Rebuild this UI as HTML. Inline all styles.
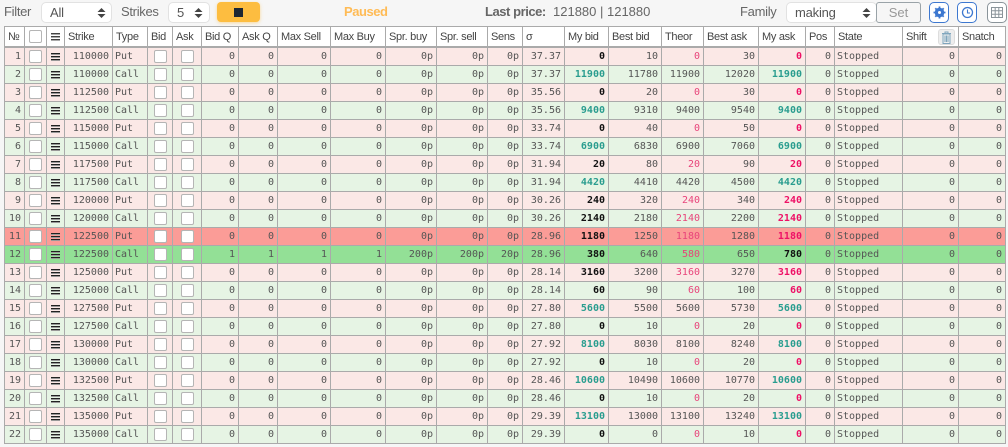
<!DOCTYPE html>
<html><head><meta charset="utf-8"><style>
html,body{margin:0;padding:0;width:1008px;height:447px;overflow:hidden;background:#f6f6f6;font-family:"Liberation Sans",sans-serif;color:#666}
.a{position:absolute}
.t{font-size:13px;line-height:20px;top:2px;white-space:nowrap;letter-spacing:-.3px}
.s{top:2px;height:19px;border:1px solid #e2e2e2;border-radius:5px;background:#fff;box-sizing:content-box;font-size:13px;line-height:19px;color:#555;letter-spacing:-.2px}
.s span{position:absolute;left:8px}
.s svg{position:absolute;top:4px}
.ib{top:2px;width:18px;height:19px;border:1px solid #3d78d0;border-radius:5px;background:#fff}
table{position:absolute;left:4px;top:26px;border-collapse:separate;border-spacing:0;table-layout:fixed;width:1002px;border-top:1px solid #aaa;border-left:1px solid #aaa}
td,th{border-right:1px solid #aaa;border-bottom:1px solid #aaa;padding:0 3px;overflow:hidden;white-space:nowrap;box-sizing:border-box}
th{height:21px;background:#fff;border-bottom:2px solid #aaa;font:normal 11px/18px "Liberation Sans",sans-serif;letter-spacing:-.3px;color:#444;text-align:left;position:relative;padding:0 3px}
td{height:18px;font:10px/17px "DejaVu Sans Mono",monospace;color:#555;text-align:right}
tr.p td{background:#fbe8e6}
tr.g td{background:#e6f4e4}
tr.P td{background:#fb9c97}
tr.G td{background:#93e096}
td:nth-child(2),td:nth-child(3),td:nth-child(6),td:nth-child(7){text-align:center;padding:0}
td:nth-child(5),td:nth-child(22){text-align:left;padding-left:2px}
td.b{font-weight:bold;color:#111}
td.c{color:#2a9d8f;font-weight:bold}
td.r{color:#e8447a}
td.m{color:#ee1166;font-weight:bold}
i{display:inline-block;width:11px;height:11px;border:1px solid #b5b5b5;border-radius:2px;background:#fff;vertical-align:middle;margin-top:1px}
u{display:block;width:9px;height:8px;margin:1px auto 0;background:repeating-linear-gradient(#222 0 1px,#999 1px 2px,transparent 2px 3px)}
th u{margin-top:0;background:repeating-linear-gradient(#444 0 1px,#aaa 1px 2px,transparent 2px 3px)}
</style></head><body>
<div class="a t" style="left:4px">Filter</div>
<div class="a s" style="left:41px;width:69px"><span>All</span><svg class="a" style="left:55px" width="9" height="12" viewBox="0 0 9 12"><path d="M4.500 1L8.500 5H.5zM4.500 11L.5 7H8.500z" fill="#444"/></svg></div>
<div class="a t" style="left:121px">Strikes</div>
<div class="a s" style="left:168px;width:40px"><span>5</span><svg class="a" style="left:25px" width="9" height="12" viewBox="0 0 9 12"><path d="M4.500 1L8.500 5H.5zM4.500 11L.5 7H8.500z" fill="#444"/></svg></div>
<div class="a" style="left:217px;top:2px;width:43px;height:20px;background:#fdbd40;border-radius:4px;box-shadow:0 1px 3px rgba(253,189,64,.5)"></div>
<div class="a" style="left:234px;top:8px;width:9px;height:9px;background:#1d2733"></div>
<div class="a t" style="left:344px;font-weight:bold;color:#ffbb55;letter-spacing:-.45px">Paused</div>
<div class="a t" style="left:485px;font-weight:bold;color:#666;letter-spacing:-.45px">Last price:</div>
<div class="a t" style="left:553px;letter-spacing:0">121880 | 121880</div>
<div class="a t" style="left:740px">Family</div>
<div class="a s" style="left:786px;width:89px"><span>making</span><svg class="a" style="left:75px" width="9" height="12" viewBox="0 0 9 12"><path d="M4.500 1L8.500 5H.5zM4.500 11L.5 7H8.500z" fill="#444"/></svg></div>
<div class="a" style="left:876px;top:2px;width:43px;height:19px;border:1px solid #9aa3a8;border-radius:3px;background:#f6f6f6;font-size:13px;line-height:19px;text-align:center;color:#999">Set</div>
<div class="a ib" style="left:929px"><svg class="a" style="left:3px;top:3px" width="13" height="13" viewBox="0 0 13 13"><circle cx="6.500" cy="6.500" r="3.500" fill="none" stroke="#3d78d0" stroke-width="2.600"/><path d="M6.500 .5V12.500M.5 6.500H12.500M2.300 2.300L10.700 10.700M10.700 2.300L2.300 10.700" stroke="#3d78d0" stroke-width="1.800"/><circle cx="6.500" cy="6.500" r="1.500" fill="#fff"/></svg></div>
<div class="a ib" style="left:957px"><svg class="a" style="left:3px;top:3px" width="13" height="13" viewBox="0 0 13 13"><circle cx="6.500" cy="6.500" r="5" fill="none" stroke="#3d78d0" stroke-width="1.300"/><path d="M6.500 3.500V7H9" fill="none" stroke="#3d78d0" stroke-width="1.100"/></svg></div>
<div class="a ib" style="left:987px;border-color:#8a949a"><svg class="a" style="left:2px;top:3px" width="14" height="13" viewBox="0 0 14 13"><path d="M1.500 1.500H12.500V11.500H1.500ZM1.500 4.800H12.500M1.500 8.200H12.500M5.200 1.500V11.500M8.800 1.500V11.500" fill="none" stroke="#8a949a" stroke-width="1"/></svg></div>
<table><colgroup><col style="width:20px"><col style="width:22px"><col style="width:18px"><col style="width:48px"><col style="width:35px"><col style="width:25px"><col style="width:29px"><col style="width:37px"><col style="width:39px"><col style="width:53px"><col style="width:55px"><col style="width:51px"><col style="width:51px"><col style="width:35px"><col style="width:42px"><col style="width:44px"><col style="width:53px"><col style="width:42px"><col style="width:55px"><col style="width:47px"><col style="width:29px"><col style="width:68px"><col style="width:56px"><col style="width:47px"></colgroup>
<thead><tr><th>№</th><th style="padding:0;text-align:center"><i style="margin-top:-1px"></i></th><th style="padding:0;text-align:center"><u></u></th><th>Strike</th><th>Type</th><th>Bid</th><th>Ask</th><th>Bid Q</th><th>Ask Q</th><th>Max Sell</th><th>Max Buy</th><th>Spr. buy</th><th>Spr. sell</th><th>Sens</th><th>σ</th><th>My bid</th><th>Best bid</th><th>Theor</th><th>Best ask</th><th>My ask</th><th>Pos</th><th>State</th><th>Shift<span class="a" style="left:35px;top:2px;width:17px;height:16px;background:#eee;border:1px solid #ddd;border-radius:3px;box-sizing:border-box"><svg class="a" style="left:2px;top:1px" width="11" height="13" viewBox="0 0 11 13"><path d="M2 3V12.500H9V3ZM1 2.500H10M4 2V1H7V2M4 4.500V11M5.500 4.500V11M7 4.500V11" fill="none" stroke="#7fa5bd" stroke-width="1"/></svg></span></th><th>Snatch</th></tr></thead>
<tbody>
<tr class="p"><td>1</td><td><i></i></td><td><u></u></td><td>110000</td><td>Put</td><td><i></i></td><td><i></i></td><td>0</td><td>0</td><td>0</td><td>0</td><td>0p</td><td>0p</td><td>0p</td><td>37.37</td><td class="b">0</td><td>10</td><td class="r">0</td><td>30</td><td class="m">0</td><td>0</td><td>Stopped</td><td>0</td><td>0</td></tr>
<tr class="g"><td>2</td><td><i></i></td><td><u></u></td><td>110000</td><td>Call</td><td><i></i></td><td><i></i></td><td>0</td><td>0</td><td>0</td><td>0</td><td>0p</td><td>0p</td><td>0p</td><td>37.37</td><td class="c">11900</td><td>11780</td><td>11900</td><td>12020</td><td class="c">11900</td><td>0</td><td>Stopped</td><td>0</td><td>0</td></tr>
<tr class="p"><td>3</td><td><i></i></td><td><u></u></td><td>112500</td><td>Put</td><td><i></i></td><td><i></i></td><td>0</td><td>0</td><td>0</td><td>0</td><td>0p</td><td>0p</td><td>0p</td><td>35.56</td><td class="b">0</td><td>20</td><td class="r">0</td><td>30</td><td class="m">0</td><td>0</td><td>Stopped</td><td>0</td><td>0</td></tr>
<tr class="g"><td>4</td><td><i></i></td><td><u></u></td><td>112500</td><td>Call</td><td><i></i></td><td><i></i></td><td>0</td><td>0</td><td>0</td><td>0</td><td>0p</td><td>0p</td><td>0p</td><td>35.56</td><td class="c">9400</td><td>9310</td><td>9400</td><td>9540</td><td class="c">9400</td><td>0</td><td>Stopped</td><td>0</td><td>0</td></tr>
<tr class="p"><td>5</td><td><i></i></td><td><u></u></td><td>115000</td><td>Put</td><td><i></i></td><td><i></i></td><td>0</td><td>0</td><td>0</td><td>0</td><td>0p</td><td>0p</td><td>0p</td><td>33.74</td><td class="b">0</td><td>40</td><td class="r">0</td><td>50</td><td class="m">0</td><td>0</td><td>Stopped</td><td>0</td><td>0</td></tr>
<tr class="g"><td>6</td><td><i></i></td><td><u></u></td><td>115000</td><td>Call</td><td><i></i></td><td><i></i></td><td>0</td><td>0</td><td>0</td><td>0</td><td>0p</td><td>0p</td><td>0p</td><td>33.74</td><td class="c">6900</td><td>6830</td><td>6900</td><td>7060</td><td class="c">6900</td><td>0</td><td>Stopped</td><td>0</td><td>0</td></tr>
<tr class="p"><td>7</td><td><i></i></td><td><u></u></td><td>117500</td><td>Put</td><td><i></i></td><td><i></i></td><td>0</td><td>0</td><td>0</td><td>0</td><td>0p</td><td>0p</td><td>0p</td><td>31.94</td><td class="b">20</td><td>80</td><td class="r">20</td><td>90</td><td class="m">20</td><td>0</td><td>Stopped</td><td>0</td><td>0</td></tr>
<tr class="g"><td>8</td><td><i></i></td><td><u></u></td><td>117500</td><td>Call</td><td><i></i></td><td><i></i></td><td>0</td><td>0</td><td>0</td><td>0</td><td>0p</td><td>0p</td><td>0p</td><td>31.94</td><td class="c">4420</td><td>4410</td><td>4420</td><td>4500</td><td class="c">4420</td><td>0</td><td>Stopped</td><td>0</td><td>0</td></tr>
<tr class="p"><td>9</td><td><i></i></td><td><u></u></td><td>120000</td><td>Put</td><td><i></i></td><td><i></i></td><td>0</td><td>0</td><td>0</td><td>0</td><td>0p</td><td>0p</td><td>0p</td><td>30.26</td><td class="b">240</td><td>320</td><td class="r">240</td><td>340</td><td class="m">240</td><td>0</td><td>Stopped</td><td>0</td><td>0</td></tr>
<tr class="g"><td>10</td><td><i></i></td><td><u></u></td><td>120000</td><td>Call</td><td><i></i></td><td><i></i></td><td>0</td><td>0</td><td>0</td><td>0</td><td>0p</td><td>0p</td><td>0p</td><td>30.26</td><td class="b">2140</td><td>2180</td><td class="r">2140</td><td>2200</td><td class="m">2140</td><td>0</td><td>Stopped</td><td>0</td><td>0</td></tr>
<tr class="P"><td>11</td><td><i></i></td><td><u></u></td><td>122500</td><td>Put</td><td><i></i></td><td><i></i></td><td>0</td><td>0</td><td>0</td><td>0</td><td>0p</td><td>0p</td><td>0p</td><td>28.96</td><td class="b">1180</td><td>1250</td><td class="r">1180</td><td>1280</td><td class="m">1180</td><td>0</td><td>Stopped</td><td>0</td><td>0</td></tr>
<tr class="G"><td>12</td><td><i></i></td><td><u></u></td><td>122500</td><td>Call</td><td><i></i></td><td><i></i></td><td>1</td><td>1</td><td>1</td><td>1</td><td>200p</td><td>200p</td><td>20p</td><td>28.96</td><td class="b">380</td><td>640</td><td class="r">580</td><td>650</td><td class="b">780</td><td>0</td><td>Stopped</td><td>0</td><td>0</td></tr>
<tr class="p"><td>13</td><td><i></i></td><td><u></u></td><td>125000</td><td>Put</td><td><i></i></td><td><i></i></td><td>0</td><td>0</td><td>0</td><td>0</td><td>0p</td><td>0p</td><td>0p</td><td>28.14</td><td class="b">3160</td><td>3200</td><td class="r">3160</td><td>3270</td><td class="m">3160</td><td>0</td><td>Stopped</td><td>0</td><td>0</td></tr>
<tr class="g"><td>14</td><td><i></i></td><td><u></u></td><td>125000</td><td>Call</td><td><i></i></td><td><i></i></td><td>0</td><td>0</td><td>0</td><td>0</td><td>0p</td><td>0p</td><td>0p</td><td>28.14</td><td class="b">60</td><td>90</td><td class="r">60</td><td>100</td><td class="m">60</td><td>0</td><td>Stopped</td><td>0</td><td>0</td></tr>
<tr class="p"><td>15</td><td><i></i></td><td><u></u></td><td>127500</td><td>Put</td><td><i></i></td><td><i></i></td><td>0</td><td>0</td><td>0</td><td>0</td><td>0p</td><td>0p</td><td>0p</td><td>27.80</td><td class="c">5600</td><td>5500</td><td>5600</td><td>5730</td><td class="c">5600</td><td>0</td><td>Stopped</td><td>0</td><td>0</td></tr>
<tr class="g"><td>16</td><td><i></i></td><td><u></u></td><td>127500</td><td>Call</td><td><i></i></td><td><i></i></td><td>0</td><td>0</td><td>0</td><td>0</td><td>0p</td><td>0p</td><td>0p</td><td>27.80</td><td class="b">0</td><td>10</td><td class="r">0</td><td>20</td><td class="m">0</td><td>0</td><td>Stopped</td><td>0</td><td>0</td></tr>
<tr class="p"><td>17</td><td><i></i></td><td><u></u></td><td>130000</td><td>Put</td><td><i></i></td><td><i></i></td><td>0</td><td>0</td><td>0</td><td>0</td><td>0p</td><td>0p</td><td>0p</td><td>27.92</td><td class="c">8100</td><td>8030</td><td>8100</td><td>8240</td><td class="c">8100</td><td>0</td><td>Stopped</td><td>0</td><td>0</td></tr>
<tr class="g"><td>18</td><td><i></i></td><td><u></u></td><td>130000</td><td>Call</td><td><i></i></td><td><i></i></td><td>0</td><td>0</td><td>0</td><td>0</td><td>0p</td><td>0p</td><td>0p</td><td>27.92</td><td class="b">0</td><td>10</td><td class="r">0</td><td>20</td><td class="m">0</td><td>0</td><td>Stopped</td><td>0</td><td>0</td></tr>
<tr class="p"><td>19</td><td><i></i></td><td><u></u></td><td>132500</td><td>Put</td><td><i></i></td><td><i></i></td><td>0</td><td>0</td><td>0</td><td>0</td><td>0p</td><td>0p</td><td>0p</td><td>28.46</td><td class="c">10600</td><td>10490</td><td>10600</td><td>10770</td><td class="c">10600</td><td>0</td><td>Stopped</td><td>0</td><td>0</td></tr>
<tr class="g"><td>20</td><td><i></i></td><td><u></u></td><td>132500</td><td>Call</td><td><i></i></td><td><i></i></td><td>0</td><td>0</td><td>0</td><td>0</td><td>0p</td><td>0p</td><td>0p</td><td>28.46</td><td class="b">0</td><td>10</td><td class="r">0</td><td>20</td><td class="m">0</td><td>0</td><td>Stopped</td><td>0</td><td>0</td></tr>
<tr class="p"><td>21</td><td><i></i></td><td><u></u></td><td>135000</td><td>Put</td><td><i></i></td><td><i></i></td><td>0</td><td>0</td><td>0</td><td>0</td><td>0p</td><td>0p</td><td>0p</td><td>29.39</td><td class="c">13100</td><td>13000</td><td>13100</td><td>13240</td><td class="c">13100</td><td>0</td><td>Stopped</td><td>0</td><td>0</td></tr>
<tr class="g"><td>22</td><td><i></i></td><td><u></u></td><td>135000</td><td>Call</td><td><i></i></td><td><i></i></td><td>0</td><td>0</td><td>0</td><td>0</td><td>0p</td><td>0p</td><td>0p</td><td>29.39</td><td class="b">0</td><td>0</td><td class="r">0</td><td>10</td><td class="m">0</td><td>0</td><td>Stopped</td><td>0</td><td>0</td></tr>
</tbody></table>
</body></html>
